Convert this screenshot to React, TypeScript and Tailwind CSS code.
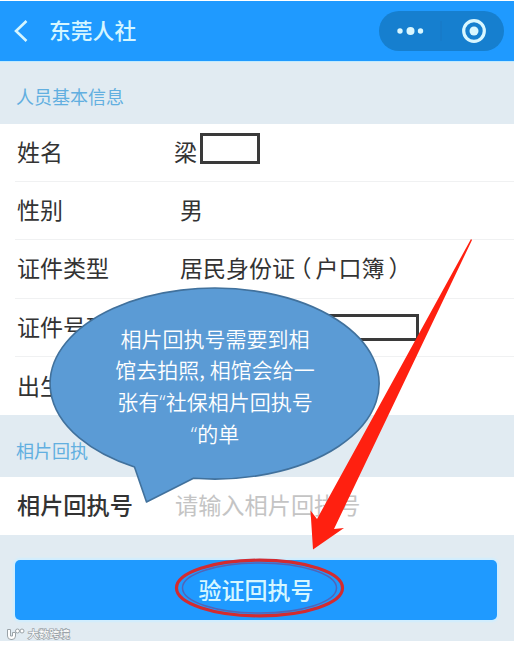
import type { ReactNode } from "react";

type Field = {
  label: string;
  value: ReactNode;
};

const fields: Field[] = [
  {
    label: "姓名",
    value: (
      <span className="-ml-[6px] flex items-center">
        <span className="w-[26px]">梁</span>
        <span className="-mt-[5px] h-[31px] w-[60px] border-[3px] border-[#3a3a3a] bg-white" />
      </span>
    ),
  },
  { label: "性别", value: "男" },
  {
    label: "证件类型",
    value: (
      <span className="flex">
        居民身份证
        <span className="ml-[5px] mr-[4px] [font-feature-settings:'halt']">（</span>
        户口簿
        <span className="ml-[4px] [font-feature-settings:'halt']">）</span>
      </span>
    ),
  },
  {
    label: "证件号码",
    value: <span className="mt-[2px] block h-[27px] w-[239px] border-[3px] border-[#3a3a3a] bg-white" />,
  },
  { label: "出生日期", value: "" },
];

function Header() {
  return (
    <header className="mt-px flex h-[61px] items-center border-b border-[#bfeaff] bg-[#1f9aff] pl-[13px] pr-[10px] text-[#d5f6ff]">
      <svg width="16" height="24" viewBox="0 0 16 24" fill="none" stroke="currentColor" strokeWidth="2.6">
        <path d="M13.5 2 3 12l10.500 10" />
      </svg>
      <h1 className="-mt-[2px] ml-[20px] text-[21.800px] font-medium leading-none">东莞人社</h1>
      <div className="ml-auto flex h-[40px] w-[125px] items-center rounded-full bg-[#167fcf]">
        <svg width="125" height="40" viewBox="0 0 125 40" fill="#d9f7ff">
          <circle cx="21" cy="20" r="2.7" />
          <circle cx="31.500" cy="20" r="4" />
          <circle cx="41.500" cy="20" r="2.7" />
          <path d="M62 10v20" stroke="#1978c4" />
          <circle cx="95" cy="20" r="10.300" fill="none" stroke="#d9f7ff" strokeWidth="3.200" />
          <circle cx="95" cy="20" r="4.500" />
        </svg>
      </div>
    </header>
  );
}

function SectionTitle({ children }: { children: ReactNode }) {
  return (
    <h2 className="flex h-[61.500px] items-center bg-[#e1ebf2] pl-[16px] pt-[7px] text-[18px] leading-none text-[#62afe0]">
      {children}
    </h2>
  );
}

function Quote() {
  return <span className="font-['Open_Sans',sans-serif]">“</span>;
}

function Callout() {
  return (
    <div className="absolute left-[48px] top-[286px] h-[220px] w-[334px]">
      <svg width="334" height="220" viewBox="47.5 286 334 220" className="absolute inset-0">
        <path
          d="M134 467 146 502 193 478.300A164.500 95.500 0 1 0 134 467Z"
          fill="#5b9bd5"
          stroke="#41719c"
          strokeWidth="1.600"
          strokeLinejoin="round"
        />
      </svg>
      <p className="relative pt-[37px] text-center text-[21px] font-[350] leading-[31.300px] text-white">
        相片回执号需要到相
        <br />
        馆去拍照, 相馆会给一
        <br />
        张有
        <Quote />
        社保相片回执号
        <br />
        <Quote />
        的单
      </p>
    </div>
  );
}

function Marks() {
  return (
    <svg width="514" height="646" viewBox="0 0 514 646" className="pointer-events-none absolute inset-0">
      <path d="M471 239 317 519 310.500 510.500 313 549.500 344 528 334 529 472 240Z" fill="#ff2010" />
      <ellipse cx="259.500" cy="588" rx="77" ry="25" fill="none" stroke="#5264b8" strokeWidth="1.500" />
      <ellipse cx="259.500" cy="588" rx="83" ry="27.800" fill="none" stroke="#d32b30" strokeWidth="3.200" />
    </svg>
  );
}

function Watermark() {
  return (
    <div className="flex items-center gap-[3px] pl-[7px] text-[#9ba3a8]">
      <svg width="18" height="13" viewBox="0 0 18 13" fill="none" stroke="currentColor">
        <path d="M.5 1.500h3V8h2V4.500h3V8A3.500 3.500 0 0 1 5 11.500H4A3.500 3.500 0 0 1 .5 8Z" fill="white" />
        <circle cx="10.500" cy="3" r="2" fill="white" />
        <circle cx="15" cy="3" r="2" fill="white" />
      </svg>
      <span className="text-[10.500px] leading-none text-white [-webkit-text-stroke:1.5px_#9ba3a8] [paint-order:stroke_fill]">
        大数跨境
      </span>
    </div>
  );
}

export default function App() {
  return (
    <div className="relative flex h-[646px] w-[514px] flex-col overflow-hidden bg-white font-['Noto_Sans_CJK_SC',sans-serif] text-[23px] leading-none text-[#333]">
      <Header />

      <SectionTitle>人员基本信息</SectionTitle>
      <div>
        {fields.map((field, i) => (
          <div key={field.label} className="ml-[15px] flex h-[58.400px] items-center">
            <div
              className={`flex h-full w-full items-center pb-[2px] pl-[2px] ${
                i < fields.length - 1 ? "border-b border-[#f0f1f2]" : ""
              }`}
            >
              <span className="w-[163px]">{field.label}</span>
              <span>{field.value}</span>
            </div>
          </div>
        ))}
      </div>

      <SectionTitle>相片回执</SectionTitle>
      <div className="flex h-[58px] items-center pb-[2px] pl-[17px]">
        <span className="w-[158px] text-[23.200px] font-medium">相片回执号</span>
        <span className="text-[23.200px] text-[#c4c4c4]">请输入相片回执号</span>
      </div>

      <div className="flex h-[106px] flex-col bg-[#e1ebf2] pl-[15px] pt-[25px]">
        <button
          type="button"
          className="h-[60px] w-[482px] shrink-0 rounded-[5px] bg-[#1f9aff] text-[23px] font-medium leading-none text-[#d5f6ff] shadow-[0_0_2px_2px_#cfeeff]"
        >
          验证回执号
        </button>
        <div className="-ml-[15px] mt-[8px]">
          <Watermark />
        </div>
      </div>

      <Callout />
      <Marks />
    </div>
  );
}
